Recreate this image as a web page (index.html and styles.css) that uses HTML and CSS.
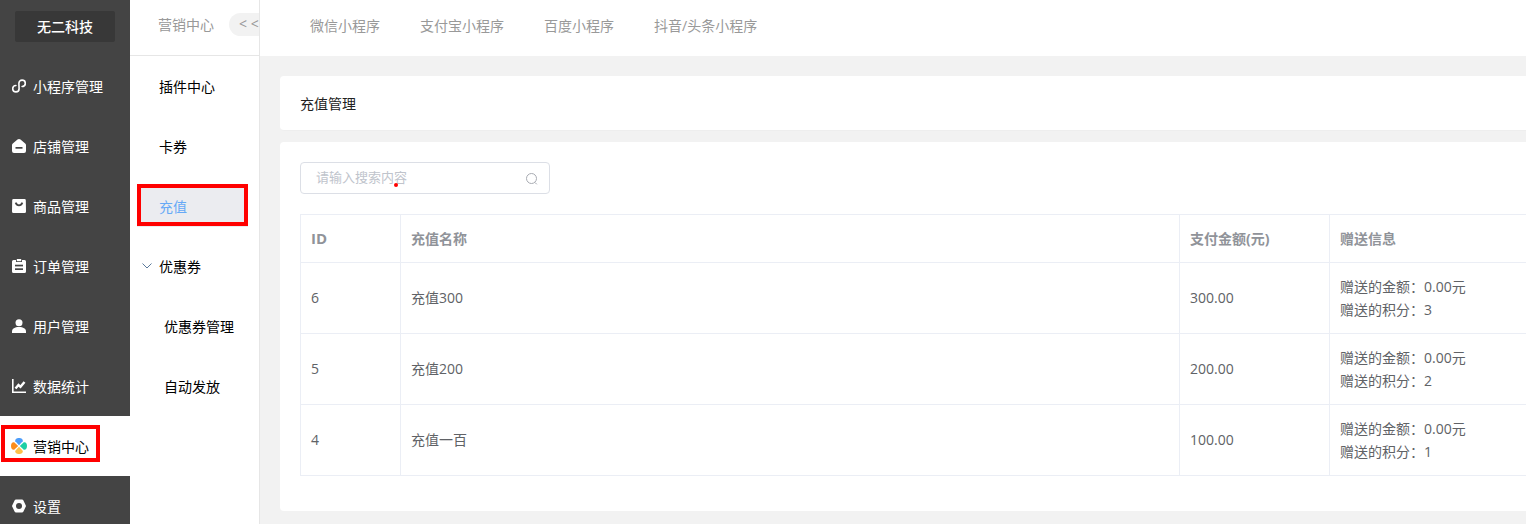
FILE: index.html
```html
<!DOCTYPE html>
<html lang="zh">
<head>
<meta charset="utf-8">
<title>充值管理</title>
<link rel="stylesheet" href="styles.css">
</head>
<body>
<div class="app">
  <aside class="side">
    <div class="logo-wrap"><div class="logo">无二科技</div></div>
    <a class="nav"><svg class="ico" viewBox="0 0 14 14"><path d="M3.900 6.500a3.200 3.200 0 1 0 3.200 3.200L6.900 4.300a3.200 3.200 0 1 1 3.200 3.200" fill="none" stroke="#fff" stroke-width="1.600" stroke-linecap="round"/></svg>小程序管理</a>
    <a class="nav"><svg class="ico" viewBox="0 0 14 14"><path d="M0 6c0-.6.300-1.100.8-1.500L5.500.6c.9-.7 2.100-.7 3 0l4.700 3.900c.5.400.8.900.8 1.500v6a2 2 0 0 1-2 2H2a2 2 0 0 1-2-2z" fill="#fff"/><rect x="3.500" y="8" width="7" height="1.700" fill="#444"/></svg>店铺管理</a>
    <a class="nav"><svg class="ico" viewBox="0 0 14 14"><path d="M1.500 0h11A1.300 1.300 0 0 1 13.800 1.300l.2 11.200a1.500 1.500 0 0 1-1.500 1.500h-11A1.500 1.500 0 0 1 0 12.500L.2 1.300A1.300 1.300 0 0 1 1.500 0z" fill="#fff"/><path d="M3.600 3.600c.7 1.800 1.900 2.700 3.400 2.700s2.700-.9 3.400-2.700" fill="none" stroke="#444" stroke-width="1.700"/></svg>商品管理</a>
    <a class="nav"><svg class="ico" viewBox="0 0 14 14"><path d="M1.500 1H4v2h6V1h2.500A1.500 1.500 0 0 1 14 2.500v10a1.500 1.500 0 0 1-1.500 1.500h-11A1.500 1.500 0 0 1 0 12.500v-10A1.500 1.500 0 0 1 1.500 1z" fill="#fff"/><rect x="4.800" y="0" width="4.400" height="2.200" fill="#fff"/><rect x="3" y="5.700" width="8" height="1.700" fill="#444"/><rect x="3" y="9.300" width="8" height="1.700" fill="#444"/></svg>订单管理</a>
    <a class="nav"><svg class="ico" viewBox="0 0 14 14"><circle cx="7" cy="3.700" r="3.500" fill="#fff"/><path d="M0 12.500C0 9.500 2.800 8 7 8s7 1.500 7 4.500V14H0z" fill="#fff"/></svg>用户管理</a>
    <a class="nav"><svg class="ico" viewBox="0 0 14 14"><path d="M.8 0V13.200H14" fill="none" stroke="#fff" stroke-width="1.600"/><path d="M3.500 9.500L6.500 6l2 1.800L12.500 3" fill="none" stroke="#fff" stroke-width="2.400"/></svg>数据统计</a>
    <a class="nav nav-on"><svg class="ico" viewBox="0 0 16 16"><path d="M8 7.200L4.300 3.200C3.700 1.400 5.500 0 8 0s4.300 1.400 3.700 3.200z" fill="#4d9dfa"/><path d="M8.800 8l4-3.700C14.600 3.700 16 5.500 16 8s-1.400 4.300-3.200 3.700z" fill="#1ccfa5"/><path d="M8 8.800l3.700 4c.6 1.800-1.200 3.200-3.700 3.200s-4.300-1.400-3.700-3.200z" fill="#fdc04a"/><path d="M7.200 8l-4 3.700C1.400 12.300 0 10.500 0 8s1.400-4.300 3.200-3.700z" fill="#fb8c1c"/></svg>营销中心</a>
    <a class="nav"><svg class="ico" viewBox="0 0 14 14"><path d="M4 .6h6a1.500 1.500 0 0 1 1.300.7l2.400 4.900a1.600 1.600 0 0 1 0 1.600l-2.400 4.900a1.500 1.500 0 0 1-1.300.7H4a1.500 1.500 0 0 1-1.300-.7L.3 7.800a1.600 1.600 0 0 1 0-1.600L2.700 1.300A1.500 1.500 0 0 1 4 .6z" fill="#fff"/><circle cx="7" cy="7" r="3" fill="#444"/></svg>设置</a>
    <div class="mark mark-side"></div>
  </aside>

  <nav class="sub">
    <div class="sub-head"><span>营销中心</span><span class="fold">&lt; &lt;</span></div>
    <a class="sub-item">插件中心</a>
    <a class="sub-item">卡券</a>
    <a class="sub-item sub-on">充值</a>
    <a class="sub-item sub-group"><svg class="chev" viewBox="0 0 10 6"><path d="M.5 .5L5 5l4.500-4.500" fill="none" stroke="#5b7a9c" stroke-width="1"/></svg>优惠券</a>
    <a class="sub-item sub-child">优惠券管理</a>
    <a class="sub-item sub-child">自动发放</a>
    <div class="mark mark-sub"></div>
  </nav>

  <div class="main">
    <header class="tabs">
      <a>微信小程序</a><a>支付宝小程序</a><a>百度小程序</a><a>抖音/头条小程序</a>
    </header>
    <div class="content">
      <section class="card title-card">充值管理</section>
      <section class="card body-card">
        <div class="search">
          <span class="ph">请输入搜索内容</span>
          <svg class="search-ico" viewBox="0 0 14 14"><circle cx="6.500" cy="6.500" r="5" fill="none" stroke="#a8abb2" stroke-width="1"/><path d="M10 10.500l1.800 1.800" stroke="#a8abb2" stroke-width="1"/></svg>
          <i class="dot"></i>
        </div>
        <table class="grid">
          <colgroup><col class="c1"><col class="c2"><col class="c3"><col class="c4"></colgroup>
          <thead><tr><th class="idh">ID</th><th>充值名称</th><th>支付金额(元)</th><th>赠送信息</th></tr></thead>
          <tbody>
            <tr><td class="one">6</td><td class="one">充值300</td><td class="one">300.00</td><td><div>赠送的金额：0.00元</div><div>赠送的积分：3</div></td></tr>
            <tr><td class="one">5</td><td class="one">充值200</td><td class="one">200.00</td><td><div>赠送的金额：0.00元</div><div>赠送的积分：2</div></td></tr>
            <tr><td class="one">4</td><td class="one">充值一百</td><td class="one">100.00</td><td><div>赠送的金额：0.00元</div><div>赠送的积分：1</div></td></tr>
          </tbody>
        </table>
      </section>
    </div>
  </div>
</div>
</body>
</html>
```
FILE: styles.css
```css
* { box-sizing: border-box; }
html, body { margin: 0; height: 100%; overflow: hidden; }
body { font: 14px/1.5 "Open Sans", "Noto Sans CJK SC", sans-serif; color: #606266; background: #f2f2f2; }
.app { display: flex; height: 524px; width: 1526px; overflow: hidden; }

.side { position: relative; flex: 0 0 130px; background: #444; color: #fff; }
.logo-wrap { height: 56px; padding: 11px 15px 0; }
.logo { height: 31px; line-height: 31px; background: #383838; border-radius: 2px; text-align: center; font-weight: 500; color: #fff; }
.nav { display: flex; align-items: center; height: 60px; padding-left: 12px; color: #fff; white-space: nowrap; }
.ico { flex: 0 0 14px; width: 14px; height: 14px; margin-right: 7px; }
.nav-on { background: #fff; color: #000; padding-left: 11px; }
.nav-on .ico { flex-basis: 16px; width: 16px; height: 16px; margin-right: 6px; }
.mark { position: absolute; border: 4px solid #f00; pointer-events: none; }
.mark-side { left: 1px; top: 425px; width: 99px; height: 37px; }

.sub { position: relative; flex: 0 0 130px; background: #fff; border-right: 1px solid #e6e6e6; overflow: hidden; }
.sub-head { display: flex; align-items: center; justify-content: space-between; height: 56px; padding: 0 0 6px 28px; border-bottom: 1px solid #e6e6e6; color: #999; margin-right: -1px; }
.fold { width: 31px; height: 23px; line-height: 22px; padding-left: 10px; background: #f2f2f2; border-radius: 12px 0 0 12px; white-space: nowrap; overflow: hidden; }
.sub-item { display: flex; align-items: center; height: 60px; padding-left: 29px; color: #000; white-space: nowrap; }
.sub-on { color: #66a9f6; position: relative; isolation: isolate; }
.sub-on::before { content: ""; position: absolute; z-index: -1; left: 7px; right: 11px; top: 9px; bottom: 9px; background: #ebecf0; }
.sub-group { padding-left: 12px; }
.chev { width: 10px; height: 6px; margin-right: 7px; }
.sub-child { padding-left: 34px; }
.mark-sub { left: 7px; top: 184px; width: 111px; height: 42px; }

.main { flex: 1 1 auto; min-width: 0; overflow: hidden; }
.tabs { display: flex; gap: 40px; height: 56px; align-items: center; padding: 0 0 6px 50px; background: #fff; color: #999; white-space: nowrap; }
.content { width: 1500px; padding: 20px 0 0 20px; }
.card { background: #fff; border-radius: 4px 0 0 4px; }
.title-card { height: 55px; line-height: 55px; padding-left: 20px; color: #222; border-bottom: 1px solid #eee; }
.body-card { height: 369px; margin-top: 11px; padding: 20px; }
.search { position: relative; display: flex; align-items: center; justify-content: space-between; width: 250px; height: 32px; padding: 0 10px 0 15px; border: 1px solid #dcdfe6; border-radius: 4px; }
.ph { color: #c0c4cc; font-size: 13px; }
.search-ico { width: 14px; height: 14px; margin-top: 2px; }
.dot { position: absolute; left: 93px; top: 20px; width: 4px; height: 4px; border-radius: 50%; background: #f00; }
.grid { margin-top: 20px; width: 1300px; table-layout: fixed; border-collapse: collapse; }
.c1 { width: 100px; }
.c2 { width: 779px; }
.c3 { width: 150px; }
.grid th, .grid td { border: 1px solid #ebeef5; padding: 0 10px; text-align: left; }
.grid th { height: 48px; color: #909399; font-weight: 700; }
.grid .idh { font-size: 15px; }
.grid td { height: 71px; color: #606266; line-height: 23px; }
.grid td.one { padding-bottom: 2px; }
```
